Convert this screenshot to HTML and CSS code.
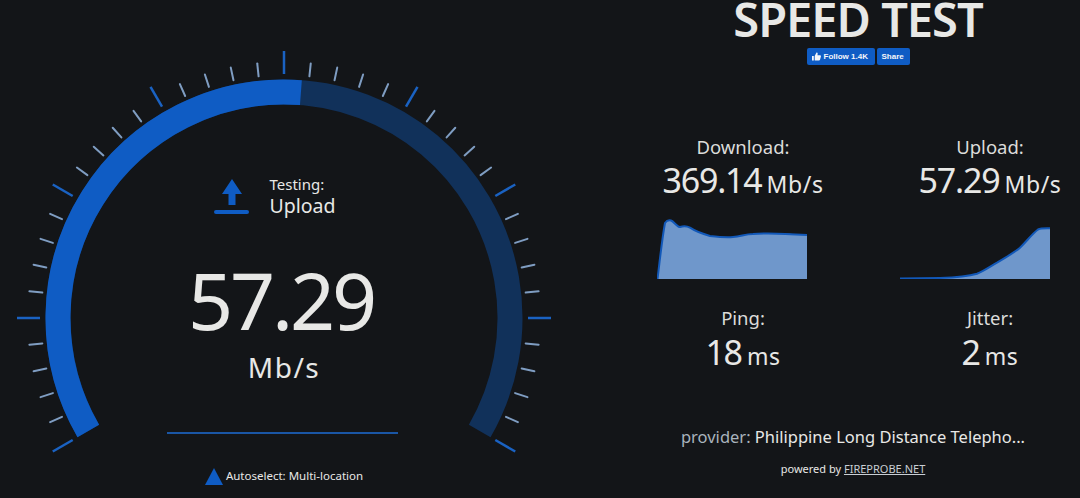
FILE: index.html
```html
<!DOCTYPE html>
<html lang="en">
<head>
<meta charset="utf-8">
<title>Speed Test</title>
<link rel="stylesheet" href="styles.css">
</head>
<body>
<main class="app">
  <section class="gauge">
    <svg class="dial" width="568" height="498" viewBox="0 0 568 498" aria-hidden="true">
      <defs>
        <line id="mn" class="tick-minor" x1="0" y1="-243" x2="0" y2="-256"/>
        <line id="mj" class="tick-major" x1="0" y1="-244" x2="0" y2="-267"/>
      </defs>
      <path class="track" d="M88.3 431A226 226 0 1 1 479.7 431"/>
      <path class="fill" d="M88.3 431A226 226 0 0 1 300.9 92.6"/>
      <g transform="translate(284 318)">
        <use href="#mj" transform="rotate(-120)"/><use href="#mn" transform="rotate(-114)"/><use href="#mn" transform="rotate(-108)"/><use href="#mn" transform="rotate(-102)"/><use href="#mn" transform="rotate(-96)"/>
        <use href="#mj" transform="rotate(-90)"/><use href="#mn" transform="rotate(-84)"/><use href="#mn" transform="rotate(-78)"/><use href="#mn" transform="rotate(-72)"/><use href="#mn" transform="rotate(-66)"/>
        <use href="#mj" transform="rotate(-60)"/><use href="#mn" transform="rotate(-54)"/><use href="#mn" transform="rotate(-48)"/><use href="#mn" transform="rotate(-42)"/><use href="#mn" transform="rotate(-36)"/>
        <use href="#mj" transform="rotate(-30)"/><use href="#mn" transform="rotate(-24)"/><use href="#mn" transform="rotate(-18)"/><use href="#mn" transform="rotate(-12)"/><use href="#mn" transform="rotate(-6)"/>
        <use href="#mj"/><use href="#mn" transform="rotate(6)"/><use href="#mn" transform="rotate(12)"/><use href="#mn" transform="rotate(18)"/><use href="#mn" transform="rotate(24)"/>
        <use href="#mj" transform="rotate(30)"/><use href="#mn" transform="rotate(36)"/><use href="#mn" transform="rotate(42)"/><use href="#mn" transform="rotate(48)"/><use href="#mn" transform="rotate(54)"/>
        <use href="#mj" transform="rotate(60)"/><use href="#mn" transform="rotate(66)"/><use href="#mn" transform="rotate(72)"/><use href="#mn" transform="rotate(78)"/><use href="#mn" transform="rotate(84)"/>
        <use href="#mj" transform="rotate(90)"/><use href="#mn" transform="rotate(96)"/><use href="#mn" transform="rotate(102)"/><use href="#mn" transform="rotate(108)"/><use href="#mn" transform="rotate(114)"/>
        <use href="#mj" transform="rotate(120)"/>
      </g>
    </svg>
    <div class="readout">
      <div class="status">
        <svg class="up-icon" width="35" height="36" viewBox="0 0 35 36" aria-hidden="true">
          <path d="M18 0 28 15H21.500V26H14.500V15H8Z"/>
          <rect x="0" y="31" width="35" height="4" rx="2"/>
        </svg>
        <div class="status-text">
          <div class="status-label">Testing:</div>
          <div class="status-value">Upload</div>
        </div>
      </div>
      <div class="speed">57.29</div>
      <div class="speed-unit">Mb/s</div>
      <div class="progress"></div>
      <div class="server"><span class="server-mark"></span>Autoselect: Multi-location</div>
    </div>
  </section>
  <section class="results">
    <header class="head">
      <h1 class="title">SPEED TEST</h1>
      <div class="social">
        <span class="fb fb-follow">
          <svg width="9" height="9" viewBox="0 0 10 10" aria-hidden="true"><path d="M0 4.500H2V9.500H0ZM3 4.500 5 .5C6 .5 6.500 1.200 6.300 2.200L6 3.700H9C9.800 3.700 10.100 4.300 9.900 5L8.900 8.600C8.700 9.200 8.300 9.500 7.700 9.500H3Z"/></svg>
          Follow 1.4K
        </span>
        <span class="fb fb-share">Share</span>
      </div>
    </header>
    <div class="stats">
      <div class="stat">
        <div class="stat-label">Download:</div>
        <div class="stat-value">369.14<small>Mb/s</small></div>
        <svg class="chart chart-down" width="150" height="60" viewBox="0 0 150 60" aria-hidden="true">
          <path class="chart-area" d="M.5 60C3 40 5 20 8 4C10 1 12 1 14 1.500C17 2.500 20 8 23 8C26 7 30 7 33 8.700C38 12 44 14.500 53 17C62 18 70 18.500 76 18C84 17.500 88 15 96 15C106 14 120 14 150 16V60Z"/>
          <path class="chart-line" d="M.5 60C3 40 5 20 8 4C10 1 12 1 14 1.500C17 2.500 20 8 23 8C26 7 30 7 33 8.700C38 12 44 14.500 53 17C62 18 70 18.500 76 18C84 17.500 88 15 96 15C106 14 120 14 150 16"/>
        </svg>
      </div>
      <div class="stat">
        <div class="stat-label">Upload:</div>
        <div class="stat-value">57.29<small>Mb/s</small></div>
        <svg class="chart" width="150" height="60" viewBox="0 0 150 60" aria-hidden="true">
          <path class="chart-area" d="M0 59.500 40 59C55 58.500 66 58 77 54.700C84 52 90 47.500 97 43.700C106 38 114 34 120 28.700C127 22 132 15 138 10.500C141 9 145 9.300 150 9.300V60H0Z"/>
          <path class="chart-line" d="M0 59.500 40 59C55 58.500 66 58 77 54.700C84 52 90 47.500 97 43.700C106 38 114 34 120 28.700C127 22 132 15 138 10.500C141 9 145 9.300 150 9.300"/>
        </svg>
      </div>
      <div class="stat stat-small">
        <div class="stat-label">Ping:</div>
        <div class="stat-value">18<small>ms</small></div>
      </div>
      <div class="stat stat-small">
        <div class="stat-label">Jitter:</div>
        <div class="stat-value">2<small>ms</small></div>
      </div>
    </div>
    <footer class="foot">
      <div class="provider"><span class="provider-key">provider:</span> Philippine Long Distance Telepho...</div>
      <div class="powered">powered by <a class="powered-link" href="#">FIREPROBE.NET</a></div>
    </footer>
  </section>
</main>
</body>
</html>
```

FILE: styles.css
```css
* {
  box-sizing: border-box;
}

html,
body {
  margin: 0;
  height: 100%;
  background: #131518;
}

body {
  font-family: "Noto Sans", "Open Sans", sans-serif;
  color: #e8e8e6;
  overflow: hidden;
}

.app {
  display: flex;
  width: 1080px;
  height: 498px;
  overflow: hidden;
}

/* Gauge */
.gauge {
  display: grid;
  flex: 0 0 568px;
  height: 498px;
}

.dial,
.readout {
  grid-area: 1 / 1;
}

.track,
.fill {
  fill: none;
  stroke-width: 25;
}

.track {
  stroke: #11315a;
}

.fill {
  stroke: #0f5cc4;
}

.tick-minor {
  stroke: #7f9dc2;
  stroke-width: 2;
  stroke-linecap: round;
}

.tick-major {
  stroke: #1a62c2;
  stroke-width: 2.500;
}

.readout {
  display: flex;
  flex-direction: column;
  align-items: center;
  padding-top: 179px;
}

.status {
  display: flex;
  align-items: flex-start;
  gap: 20px;
  height: 36px;
  margin-left: -18px;
}

.up-icon {
  fill: #0f5cc4;
}

.status-text {
  margin-top: -3px;
}

.status-label {
  font-size: 15px;
  line-height: 17px;
}

.status-value {
  font-size: 19.500px;
  line-height: 26px;
}

.speed {
  margin-top: 51px;
  margin-left: -6px;
  font-size: 79px;
  line-height: 68px;
  letter-spacing: -3.200px;
}

.speed-unit {
  margin-top: 15px;
  font-size: 28px;
  line-height: 36px;
  letter-spacing: 1.500px;
}

.progress {
  width: 231px;
  height: 2px;
  margin-top: 47px;
  margin-left: -3px;
  background: #1a56a5;
}

.server {
  display: flex;
  align-items: center;
  gap: 3px;
  margin-top: 33px;
  font-size: 11.500px;
  line-height: 18px;
}

.server-mark {
  width: 0;
  height: 0;
  border-left: 9px solid transparent;
  border-right: 9px solid transparent;
  border-bottom: 17px solid #0f5cc4;
}

/* Results */
.results {
  flex: 1;
  display: flex;
  flex-direction: column;
  padding-left: 85px;
}

.head {
  display: flex;
  flex-direction: column;
  align-items: center;
  width: 410px;
}

.title {
  margin: 0 0 10px;
  font-size: 47px;
  font-weight: 600;
  line-height: 38px;
  letter-spacing: -1px;
  white-space: nowrap;
}

.social {
  display: flex;
  gap: 2px;
}

.fb {
  display: flex;
  align-items: center;
  gap: 3px;
  height: 17px;
  padding: 0 5px;
  border-radius: 2px;
  background: #0f5cc4;
  color: #f4f6fa;
  font-family: "Liberation Sans", Arial, sans-serif;
  font-size: 8px;
  font-weight: 700;
  white-space: nowrap;
}

.fb svg {
  fill: #f4f6fa;
}

.fb-follow {
  width: 68px;
}

.fb-share {
  width: 33px;
}

.stats {
  display: grid;
  grid-template-columns: 180px 180px;
  column-gap: 67px;
  margin-top: 70px;
}

.stat {
  display: flex;
  flex-direction: column;
  align-items: center;
}

.stat-label {
  font-size: 18.500px;
  line-height: 24px;
  color: #dcdcda;
}

.stat-value {
  font-size: 34px;
  line-height: 42px;
  letter-spacing: -1.200px;
  white-space: nowrap;
}

.stat-value small {
  margin-left: 5px;
  font-size: 23px;
  letter-spacing: .6px;
}

.chart {
  align-self: flex-start;
  margin-top: 14px;
}

.chart-down {
  margin-left: 4px;
}

.chart-area {
  fill: #6f97cb;
}

.chart-line {
  fill: none;
  stroke: #1258b8;
  stroke-width: 2;
}

.stat-small {
  margin-top: 27px;
}

.stat-small .stat-value {
  margin-top: 1px;
}

.foot {
  display: flex;
  flex-direction: column;
  align-items: center;
  width: 400px;
  margin-top: 48px;
}

.provider {
  font-size: 16.500px;
  line-height: 24px;
  white-space: nowrap;
}

.provider-key {
  color: #a9b3bd;
}

.powered {
  margin-top: 12px;
  font-size: 11px;
  line-height: 16px;
}

.powered-link {
  color: #c9ced4;
}
```
